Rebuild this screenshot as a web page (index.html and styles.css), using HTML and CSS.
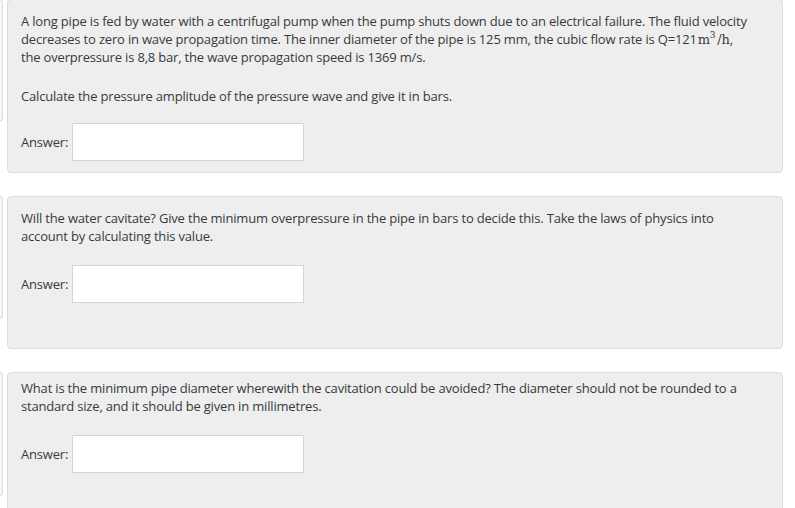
FILE: index.html
```html
<!DOCTYPE html>
<html>
<head>
<meta charset="utf-8">
<link rel="stylesheet" href="styles.css">
</head>
<body>
<div class="page">
  <div class="que q1">
    <div class="info"></div>
    <div class="content">
      <p class="qtext">A long pipe is fed by water with a centrifugal pump when the pump shuts down due to an electrical failure. The fluid velocity decreases to zero in wave propagation time. The inner diameter of the pipe is 125 mm, the cubic flow rate is Q=121<span class="math">m<sup>3</sup><span class="sl">/</span>h</span>, the overpressure is 8,8 bar, the wave propagation speed is 1369 m/s.</p>
      <p class="qtext last">Calculate the pressure amplitude of the pressure wave and give it in bars.</p>
      <div class="ablock"><label class="lbl">Answer:</label><input class="answer" type="text"></div>
    </div>
  </div>
  <div class="que q2">
    <div class="info"></div>
    <div class="content">
      <p class="qtext last">Will the water cavitate? Give the minimum overpressure in the pipe in bars to decide this. Take the laws of physics into account by calculating this value.</p>
      <div class="ablock"><label class="lbl">Answer:</label><input class="answer" type="text"></div>
    </div>
  </div>
  <div class="que q3">
    <div class="info"></div>
    <div class="content">
      <p class="qtext last">What is the minimum pipe diameter wherewith the cavitation could be avoided? The diameter should not be rounded to a standard size, and it should be given in millimetres.</p>
      <div class="ablock"><label class="lbl">Answer:</label><input class="answer" type="text"></div>
    </div>
  </div>
</div>
</body>
</html>
```
FILE: styles.css
```css
html, body {
  margin: 0;
  padding: 0;
  background: #ffffff;
}
body {
  font-family: "Open Sans", "Liberation Sans", sans-serif;
  font-size: 13px;
  line-height: 18px;
  letter-spacing: -0.18px;
  color: #373a3c;
  overflow: hidden;
}
.page {
  width: 783px;
  margin-top: -1px;
  display: flex;
  flex-direction: column;
  gap: 23px;
}
.que {
  display: flex;
  align-items: flex-start;
  gap: 4px;
}
.info {
  flex: none;
  width: 100px;
  margin-left: -97px;
  background: #f7f7f7;
  border: 1px solid #d9d9d9;
  border-radius: 3px;
  box-sizing: border-box;
}
.q1 .info { height: 122px; }
.q2 .info { height: 123px; }
.q3 .info { height: 124px; }
.content {
  flex: 1;
  background: #eeeeee;
  border: 1px solid #dcdcdc;
  border-radius: 4px;
  padding: 12px 29px 11px 13px;
}
.q2 .content { padding-bottom: 45px; }
.q3 .content { padding-top: 6px; padding-bottom: 60px; }
.qtext {
  margin: 0 0 21px 0;
}
.qtext.last { margin-bottom: 20px; }
.q1 .qtext.last { margin-bottom: 18px; }
.math {
  font-family: "DejaVu Serif", "Liberation Serif", serif;
  font-size: 13px;
  line-height: 0;
  letter-spacing: -0.2px;
  margin-left: 1px;
}
.math sup {
  font-size: 9px;
  line-height: 0;
  vertical-align: 6px;
}
.sl { margin-left: 2px; }
.ablock {
  display: flex;
  align-items: center;
  gap: 4px;
}
.lbl {
  font-size: 13px;
}
.answer {
  width: 232px;
  height: 38px;
  box-sizing: border-box;
  border: 1px solid #d6d6d6;
  background: #ffffff;
  margin: 0;
  padding: 0 8px;
  font-family: inherit;
  font-size: 13px;
}
```
